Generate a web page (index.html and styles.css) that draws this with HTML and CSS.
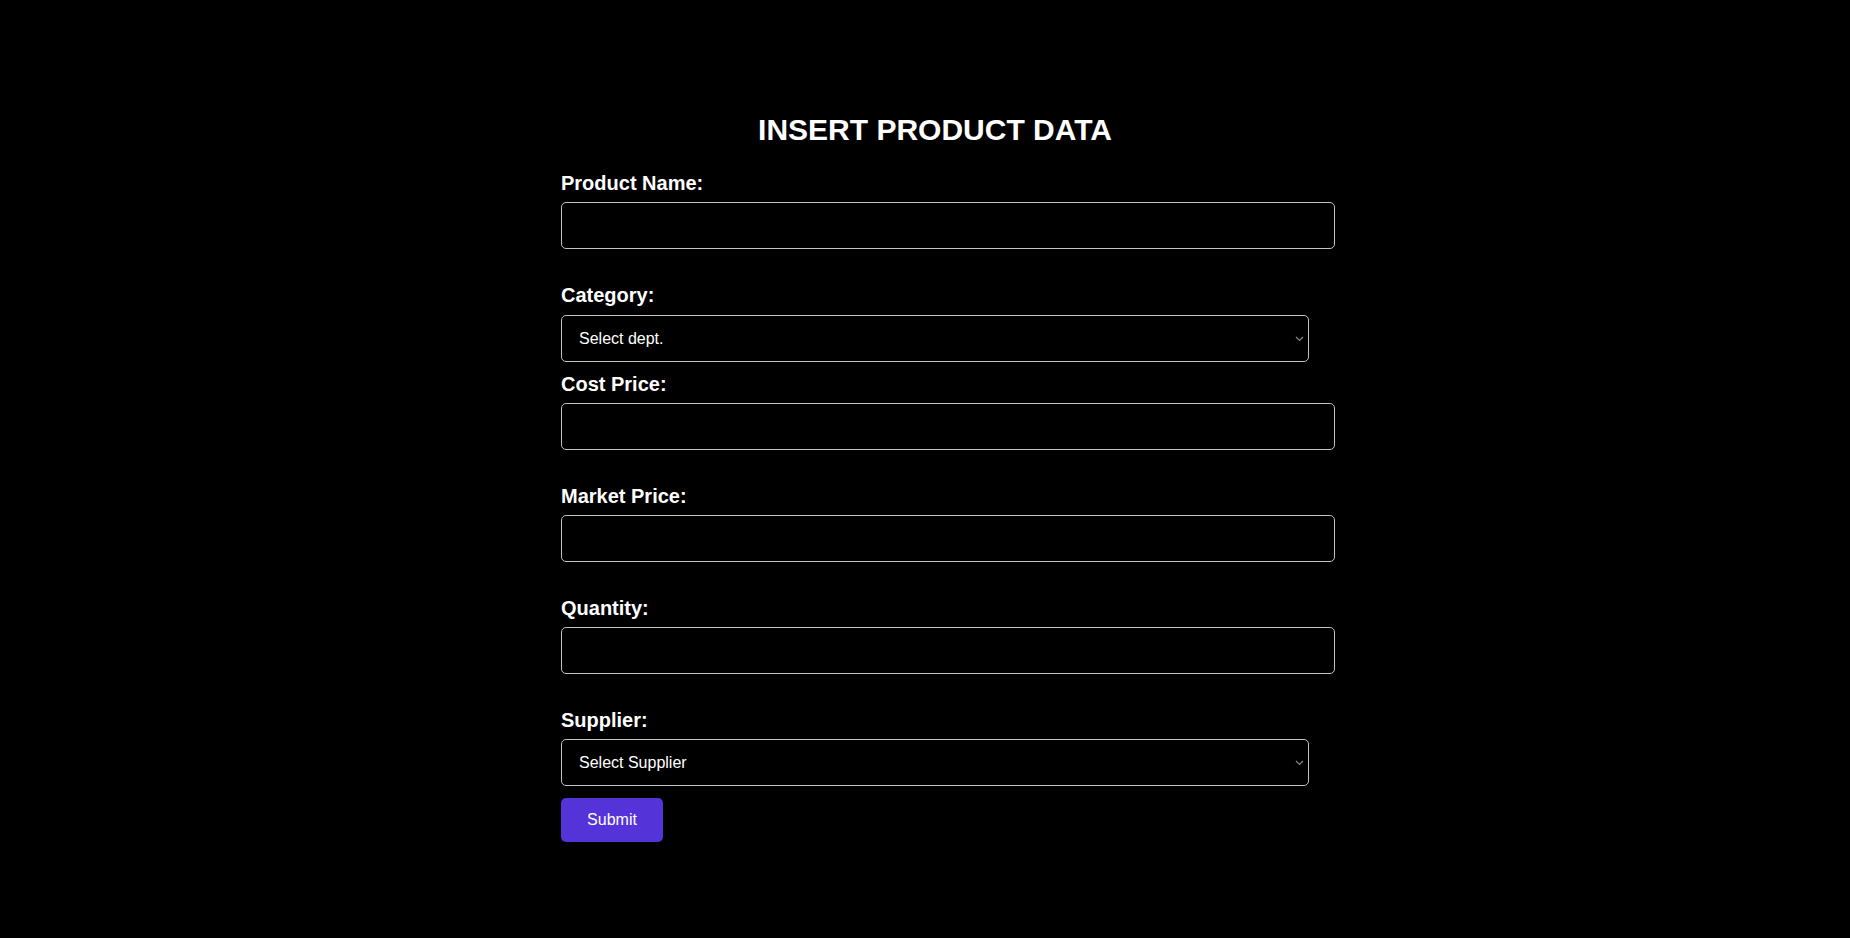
FILE: index.html
```html
<!DOCTYPE html>
<html lang="en">
<head>
<meta charset="utf-8">
<title>Insert Product Data</title>
<link rel="stylesheet" href="styles.css">
</head>
<body>
<main class="page">
  <form class="product-form">
    <h1 class="form-title">INSERT PRODUCT DATA</h1>

    <label class="field-label" for="name">Product Name:</label>
    <input class="text-input" id="name" type="text">

    <label class="field-label" for="category">Category:</label>
    <select class="select-input" id="category">
      <option>Select dept.</option>
    </select>

    <label class="field-label" for="cost">Cost Price:</label>
    <input class="text-input" id="cost" type="text">

    <label class="field-label" for="market">Market Price:</label>
    <input class="text-input" id="market" type="text">

    <label class="field-label" for="qty">Quantity:</label>
    <input class="text-input" id="qty" type="text">

    <label class="field-label" for="supplier">Supplier:</label>
    <select class="select-input select-last" id="supplier">
      <option>Select Supplier</option>
    </select>

    <div class="actions">
      <button class="submit-btn" type="button">Submit</button>
    </div>
  </form>
</main>
</body>
</html>
```

FILE: styles.css
```css
html, body {
  margin: 0;
  padding: 0;
  background: #000;
  color: #fff;
  font-family: "Liberation Sans", Arial, sans-serif;
}

.page {
  min-height: 938px;
  padding-top: 113px;
  box-sizing: border-box;
}

.product-form {
  width: 748px;
  margin-left: 561px;
  display: flex;
  flex-direction: column;
  align-items: flex-start;
}

.form-title {
  align-self: stretch;
  margin: 0 0 25px;
  font-size: 30px;
  line-height: 34px;
  font-weight: 700;
  text-align: center;
}

.field-label {
  display: block;
  font-size: 20px;
  line-height: 23px;
  font-weight: 700;
}

.text-input {
  width: 100%;
  height: 45px;
  padding: 0 12px;
  margin: 7px 0 35px;
  border: 1px solid #c2c2c2;
  border-radius: 5px;
  background: #000;
  color: #fff;
  font-family: "Liberation Sans", Arial, sans-serif;
  font-size: 16px;
  box-sizing: content-box;
  outline: none;
}

.select-input {
  -webkit-appearance: none;
  appearance: none;
  width: 100%;
  height: 47px;
  box-sizing: border-box;
  padding: 0 20px 0 17px;
  margin: 8px 0 11px;
  border: 1px solid #c2c2c2;
  border-radius: 5px;
  background-color: #000;
  background-image: url("data:image/svg+xml,%3Csvg xmlns='http://www.w3.org/2000/svg' width='9' height='6' viewBox='0 0 9 6'%3E%3Cpath d='M1 1l3.5 3.5L8 1' fill='none' stroke='%23888' stroke-width='1.2'/%3E%3C/svg%3E");
  background-repeat: no-repeat;
  background-position: right 4px center;
  background-size: 9px 6px;
  color: #fff;
  font-family: "Liberation Sans", Arial, sans-serif;
  font-size: 16px;
  outline: none;
}

.select-last {
  margin-top: 7px;
  margin-bottom: 12px;
}

.actions {
  display: flex;
}

.submit-btn {
  width: 102px;
  height: 44px;
  padding: 0;
  border: none;
  border-radius: 5px;
  background: #5433d9;
  color: #fff;
  font-family: "Liberation Sans", Arial, sans-serif;
  font-size: 16px;
  cursor: pointer;
}
```
